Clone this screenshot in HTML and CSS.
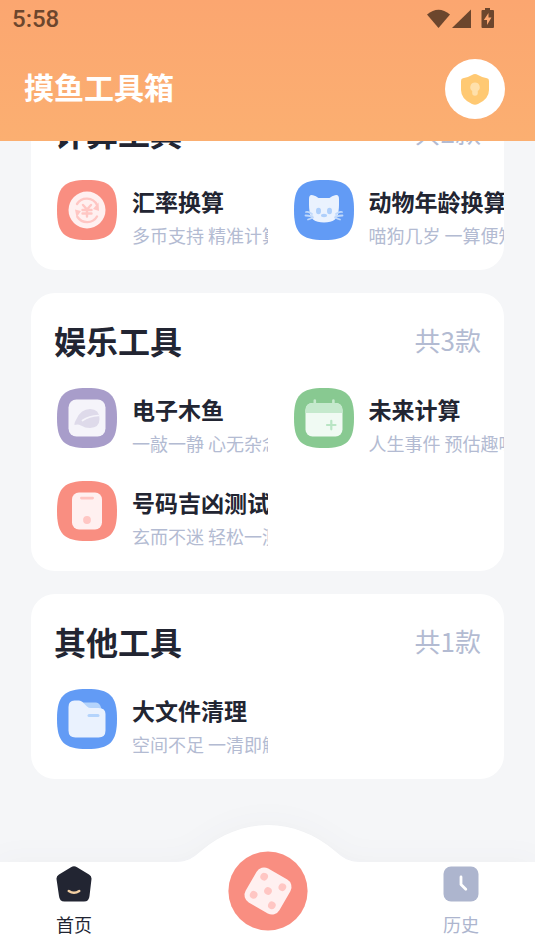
FILE: index.html
```html
<!DOCTYPE html>
<html lang="zh-CN">
<head>
<meta charset="utf-8">
<meta name="viewport" content="width=device-width, initial-scale=1">
<title>摸鱼工具箱</title>
<link rel="stylesheet" href="styles.css">
</head>
<body>
<svg width="0" height="0" class="defs" aria-hidden="true">
  <symbol id="tile" viewBox="0 0 60 60"><path d="M0 30C0 7 7 0 30 0S60 7 60 30 53 60 30 60 0 53 0 30Z"/></symbol>
</svg>
<header class="header">
  <div class="status">
    <span class="clock">5:58</span>
    <svg class="status-icons" viewBox="0 0 68 22" aria-hidden="true">
      <path d="M0 6.500Q11.500-3 23 6.500L11.500 20Z"/>
      <path d="M44 1.500V20H25Z"/>
      <path d="M58 0h5v2h3q1 0 1 1v16q0 1-1 1H55.500q-1 0-1-1V3q0-1 1-1H58Z"/>
      <path class="bolt" d="M61.500 5v4.500h3L60 17v-5h-3.200Z"/>
    </svg>
  </div>
  <div class="brand-row">
    <h1 class="brand">摸鱼工具箱</h1>
    <button class="shield" type="button" aria-label="隐私保护">
      <svg viewBox="0 0 60 60" aria-hidden="true">
        <path fill="#ffc973" d="M27 16Q30 14 33 16 37 18.500 42 19.200 44 19.500 44 22V31Q44 40 33 45 30 46.500 27 45 16 40 16 31V22Q16 19.500 18 19.200 23 18.500 27 16Z"/>
        <path fill="#ffe0ab" d="M30 23.500a4.700 4.700 0 0 1 2.800 8.500v2a2.800 2.800 0 0 1-5.600 0v-2A4.700 4.700 0 0 1 30 23.500Z"/>
      </svg>
    </button>
  </div>
</header>

<main class="scroller">
  <div class="cards">
    <section class="card">
      <div class="card-head"><h2>计算工具</h2><span class="count">共2款</span></div>
      <div class="tools">
        <a class="tool" href="#rate">
          <svg class="icon" viewBox="0 0 60 60" aria-hidden="true">
            <use href="#tile" fill="#f98e81"/>
            <circle cx="30" cy="30" r="18.500" fill="#fff0f0"/>
            <g fill="none" stroke="#ffc6c3" stroke-width="2.400" stroke-linecap="round">
              <path d="M20 24A11.500 11.500 0 0 1 40 25"/>
              <path d="M20.500 37A11.500 11.500 0 0 0 40 36.500"/>
              <path d="M26 25l4 4.500 4-4.500M25.500 30h9M25.500 33.500h9M30 30v6.500"/>
            </g>
            <path fill="#ffc6c3" d="M41.500 22.500 42 31 36 29Z M18 29.500 24 31 19.500 37.500Z"/>
          </svg>
          <span class="text"><strong>汇率换算</strong><span class="sub">多币支持 精准计算</span></span>
        </a>
        <a class="tool" href="#pet">
          <svg class="icon" viewBox="0 0 60 60" aria-hidden="true">
            <use href="#tile" fill="#629bf5"/>
            <path fill="#eaf2fe" d="M15 19Q15 14 19 15.200 22 16 24.500 18H35.500Q38 16 41 15.200 45 14 45 19V25Q45 28 44.500 31 44 42.500 30 42.500T15.500 31Q15 28 15 25Z"/>
            <g fill="none" stroke="#c0d9fb" stroke-width="1.800" stroke-linecap="round">
              <path d="M18 34Q14.500 31.200 12 32M18.500 36.500Q14 35.500 11.500 35.500M19 37.500Q16 38.800 14 39.500M42 34Q45.500 31.200 48 32M41.500 36.500Q46 35.500 48.500 35.500M41 37.500Q44 38.800 46 39.500"/>
            </g>
            <g fill="#aecffb"><ellipse cx="24.500" cy="31" rx="2.500" ry="3.200"/><ellipse cx="35.500" cy="31" rx="2.500" ry="3.200"/><ellipse cx="30" cy="35.500" rx="3" ry="1.700"/></g>
          </svg>
          <span class="text"><strong>动物年龄换算</strong><span class="sub">喵狗几岁 一算便知</span></span>
        </a>
      </div>
    </section>

    <section class="card">
      <div class="card-head"><h2>娱乐工具</h2><span class="count">共3款</span></div>
      <div class="tools">
        <a class="tool" href="#woodfish">
          <svg class="icon" viewBox="0 0 60 60" aria-hidden="true">
            <use href="#tile" fill="#a89dca"/>
            <rect x="11.500" y="11.500" width="37" height="37" rx="8" fill="#f5f4fa"/>
            <path fill="#dedaea" d="M17.500 37Q17 35 19.500 31 24 21 33 21 42.500 21 42.500 31 42.500 39.500 33 40 28 40 24 37.500 21 36 17.500 37Z"/>
            <path fill="none" stroke="#f5f4fa" stroke-width="1.700" stroke-linecap="round" d="M25.500 32.500Q32 28 41.500 27.500"/>
          </svg>
          <span class="text"><strong>电子木鱼</strong><span class="sub">一敲一静 心无杂念</span></span>
        </a>
        <a class="tool" href="#future">
          <svg class="icon" viewBox="0 0 60 60" aria-hidden="true">
            <use href="#tile" fill="#88c991"/>
            <rect x="11.500" y="15" width="37" height="33.500" rx="7" fill="#f0faf3"/>
            <path fill="#c5e9cd" d="M11.500 25v-3q0-7 7-7h1v-2.500a1.300 1.300 0 0 1 2.600 0V15h16v-2.500a1.300 1.300 0 0 1 2.600 0V15h1q6.800 0 6.800 7v3Z"/>
            <path fill="none" stroke="#b9e5c4" stroke-width="2.200" stroke-linecap="round" d="M33 37h8.500M37.300 32.800v8.500"/>
          </svg>
          <span class="text"><strong>未来计算</strong><span class="sub">人生事件 预估趣味</span></span>
        </a>
        <a class="tool" href="#number">
          <svg class="icon" viewBox="0 0 60 60" aria-hidden="true">
            <use href="#tile" fill="#f98e81"/>
            <rect x="15" y="11.500" width="30" height="37" rx="7" fill="#fff0f0"/>
            <rect x="23" y="15.700" width="14" height="2.800" rx="1.400" fill="#ffc6c3"/>
            <circle cx="30" cy="39" r="3.900" fill="#ffc6c3"/>
          </svg>
          <span class="text"><strong>号码吉凶测试</strong><span class="sub">玄而不迷 轻松一测</span></span>
        </a>
      </div>
    </section>

    <section class="card">
      <div class="card-head"><h2>其他工具</h2><span class="count">共1款</span></div>
      <div class="tools">
        <a class="tool" href="#clean">
          <svg class="icon" viewBox="0 0 60 60" aria-hidden="true">
            <use href="#tile" fill="#629bf5"/>
            <path fill="#b4d4fc" d="M25 13.500H39Q43 13.500 44.500 20H25Z"/>
            <path fill="#eaf2fe" d="M11.500 18Q11.500 11.500 17.500 11.500H22Q24 11.500 25.500 13L30 17.500Q31.500 19 34 19H41.500Q48.500 19 48.500 25V41.500Q48.500 48.500 41.500 48.500H18.500Q11.500 48.500 11.500 41.500Z"/>
            <rect x="30.500" y="25" width="12" height="3" rx="1.500" fill="#b4d4fc"/>
          </svg>
          <span class="text"><strong>大文件清理</strong><span class="sub">空间不足 一清即解</span></span>
        </a>
      </div>
    </section>
  </div>
</main>

<nav class="tabbar">
  <svg class="hump" viewBox="0 0 184 40" aria-hidden="true"><path fill="#fff" d="M0 37C11 37 17 33 25 26 45 9 68 0 92 0S139 9 159 26C167 33 173 37 184 37V40H0Z"/></svg>
  <a class="tab active" href="#home">
    <svg viewBox="0 0 36 36" aria-hidden="true">
      <path fill="#222532" d="M15 1.200Q18-.8 21 1.200L33 8.500Q35.700 10 35.500 13L33.500 30Q33 35.500 28 35.500H8.500Q3.500 35.500 3 30L.5 13Q.3 10 3 8.500Z"/>
      <path fill="none" stroke="#f3cfa2" stroke-width="2.600" stroke-linecap="round" d="M12.800 25Q18 28.500 23.200 25"/>
    </svg>
    <span>首页</span>
  </a>
  <button class="dice" type="button" aria-label="随机工具">
    <svg viewBox="0 0 80 80" aria-hidden="true">
      <circle cx="40" cy="40" r="39.600" fill="#f98e81"/>
      <g transform="rotate(30 40 40)">
        <rect x="20.500" y="20.500" width="39" height="39" rx="8.500" fill="#fff0f0"/>
        <g fill="#ffc6c3"><circle cx="29.500" cy="29.500" r="3.800"/><circle cx="50.500" cy="29.500" r="3.800"/><circle cx="40" cy="40" r="3.800"/><circle cx="29.500" cy="50.500" r="3.800"/><circle cx="50.500" cy="50.500" r="3.800"/></g>
      </g>
    </svg>
  </button>
  <a class="tab" href="#history">
    <svg viewBox="0 0 36 36" aria-hidden="true">
      <rect x=".5" y=".5" width="35" height="35" rx="7.500" fill="#adb5ce"/>
      <path fill="none" stroke="#fff" stroke-width="2.800" stroke-linecap="round" stroke-linejoin="round" d="M18 11v7.500l4.800 4.800"/>
    </svg>
    <span>历史</span>
  </a>
</nav>
</body>
</html>
```
FILE: styles.css
```css
* {
  box-sizing: border-box;
}

body {
  margin: 0;
  height: 100vh;
  display: flex;
  flex-direction: column;
  overflow: hidden;
  background: #f5f6f8;
  color: #222532;
  font-family: "Noto Sans CJK SC", sans-serif;
}

h1,
h2 {
  margin: 0;
}

a {
  color: inherit;
  text-decoration: none;
}

button {
  padding: 0;
  border: 0;
  background: none;
}

svg {
  display: block;
}

.defs {
  position: absolute;
}

/* Header */
.header {
  background: linear-gradient(#fba670, #fbaf71);
}

.status {
  display: flex;
  justify-content: space-between;
  align-items: center;
  height: 38px;
  padding: 0 40px 0 12px;
  color: #6c462d;
}

.clock {
  font: 500 24px/38px Roboto, sans-serif;
}

.status-icons {
  width: 68px;
  height: 22px;
  fill: currentColor;
}

.status-icons .bolt {
  fill: #fba670;
}

.brand-row {
  display: flex;
  justify-content: space-between;
  align-items: center;
  padding: 21px 30px 22px 24px;
}

.brand {
  padding-bottom: 6px;
  color: #fff;
  font-size: 30px;
  font-weight: 700;
  line-height: 40px;
}

.shield {
  width: 60px;
  height: 60px;
  border-radius: 50%;
  background: #fff;
}

/* Reversed column keeps the list scrolled to its end on load */
.scroller {
  flex: 1;
  min-height: 0;
  display: flex;
  flex-direction: column-reverse;
  overflow-y: auto;
  scrollbar-width: none;
}

.cards {
  display: flex;
  flex-direction: column;
  gap: 23px;
  padding: 0 31px 83px;
}

.card {
  padding: 24px 0 30px;
  border-radius: 24px;
  background: #fff;
}

.card-head {
  display: flex;
  justify-content: space-between;
  align-items: center;
  padding: 0 23px;
  margin-bottom: 25px;
  line-height: 46px;
}

.card-head h2 {
  font-size: 32px;
  font-weight: 700;
}

.count {
  color: #b3bbd2;
  font-size: 26px;
}

.tools {
  display: grid;
  grid-template-columns: 1fr 1fr;
  row-gap: 33px;
}

.tool {
  display: flex;
  gap: 15px;
  min-width: 0;
  padding-left: 26px;
}

.icon {
  flex: none;
  width: 60px;
  height: 60px;
}

/* Long labels are cut at the column edge only */
.text {
  display: flex;
  flex-direction: column;
  flex: 1;
  min-width: 0;
  height: 60px;
  padding-top: 3px;
  white-space: nowrap;
  overflow-x: clip;
}

.text strong {
  font-size: 23px;
  font-weight: 700;
  line-height: 36px;
}

.sub {
  color: #b3bbd2;
  font-size: 18px;
  line-height: 32px;
}

.text strong,
.sub {
  flex: none;
}

/* Tab bar */
.tabbar {
  position: relative;
  display: flex;
  justify-content: space-between;
  align-items: center;
  height: 89px;
  padding: 0 56px;
  background: #fff;
  filter: drop-shadow(0 0 14px rgba(40, 50, 70, 0.04));
}

.hump {
  position: absolute;
  top: -37px;
  left: 50%;
  width: 184px;
  height: 40px;
  margin-left: -92px;
}

.tab {
  display: flex;
  flex-direction: column;
  align-items: center;
  gap: 8px;
  margin-bottom: 10px;
  color: #adb5ce;
  font-size: 18px;
  line-height: 28px;
}

.tab svg {
  width: 36px;
  height: 36px;
}

.tab.active {
  color: #222532;
}

.dice {
  position: relative;
  width: 80px;
  height: 80px;
  margin-bottom: 32px;
}
```
